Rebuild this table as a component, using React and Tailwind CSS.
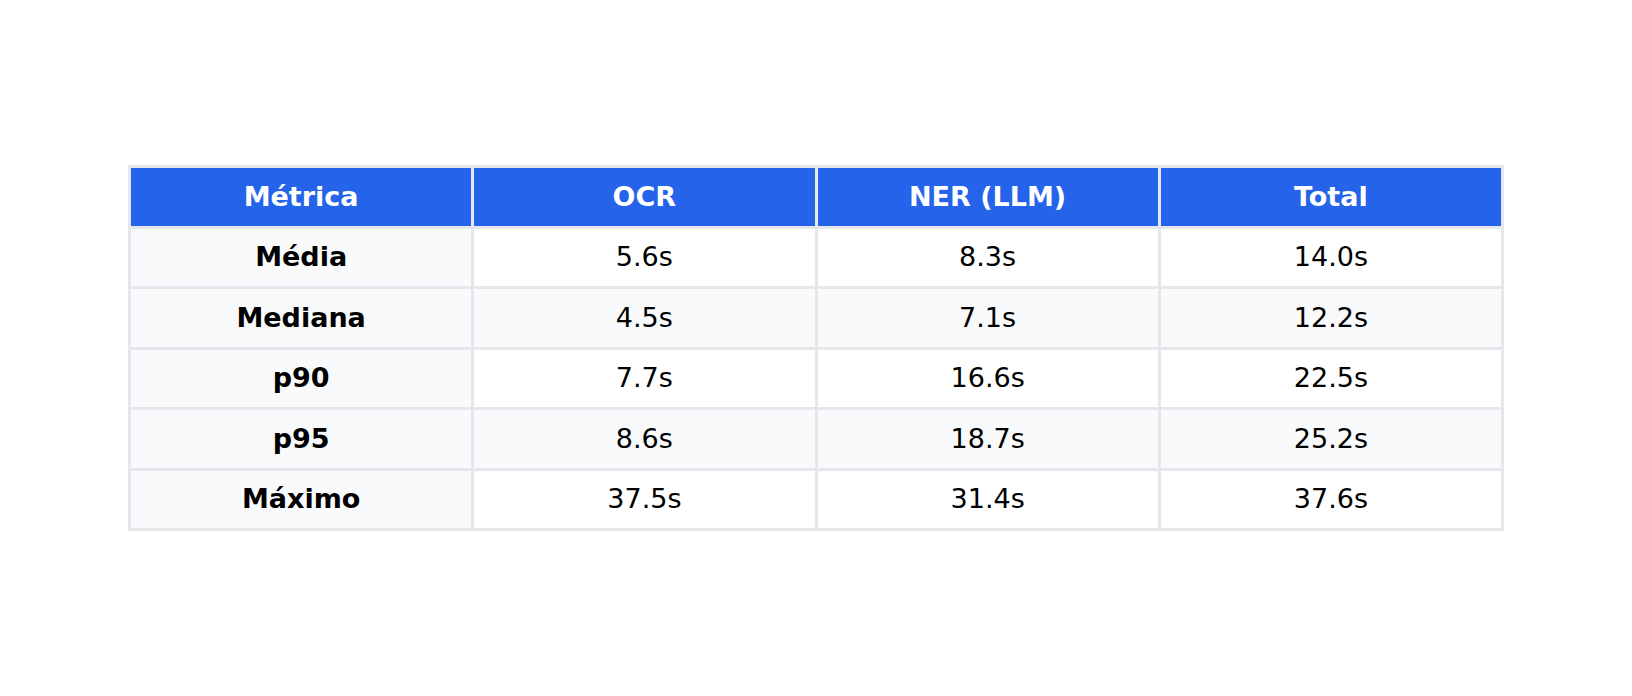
const headers = ['Métrica', 'OCR', 'NER (LLM)', 'Total']

const rows = [
  ['Média', '5.6s', '8.3s', '14.0s'],
  ['Mediana', '4.5s', '7.1s', '12.2s'],
  ['p90', '7.7s', '16.6s', '22.5s'],
  ['p95', '8.6s', '18.7s', '25.2s'],
  ['Máximo', '37.5s', '31.4s', '37.6s'],
]

export default function App() {
  return (
    <div
      className="w-[1632px] h-[696px] bg-white flex items-center justify-center"
      style={{ fontFamily: '"DejaVu Sans", sans-serif' }}
    >
      <table className="w-[1376px] border-collapse table-fixed text-[27px]">
        <thead>
          <tr>
            {headers.map((h) => (
              <th
                key={h}
                className="h-[60.5px] p-0 border-[3px] border-[#e5e7eb] bg-[#2563eb] text-white font-bold text-center"
              >
                {h}
              </th>
            ))}
          </tr>
        </thead>
        <tbody>
          {rows.map((r, i) => (
            <tr key={r[0]} className={i % 2 === 1 ? 'bg-[#f9fafb]' : 'bg-white'}>
              {r.map((c, j) => (
                <td
                  key={j}
                  className={
                    'h-[60.5px] p-0 border-[3px] border-[#e5e7eb] text-center text-black ' +
                    (j === 0 ? 'font-bold bg-[#f9fafb]' : 'font-normal')
                  }
                >
                  {c}
                </td>
              ))}
            </tr>
          ))}
        </tbody>
      </table>
    </div>
  )
}
